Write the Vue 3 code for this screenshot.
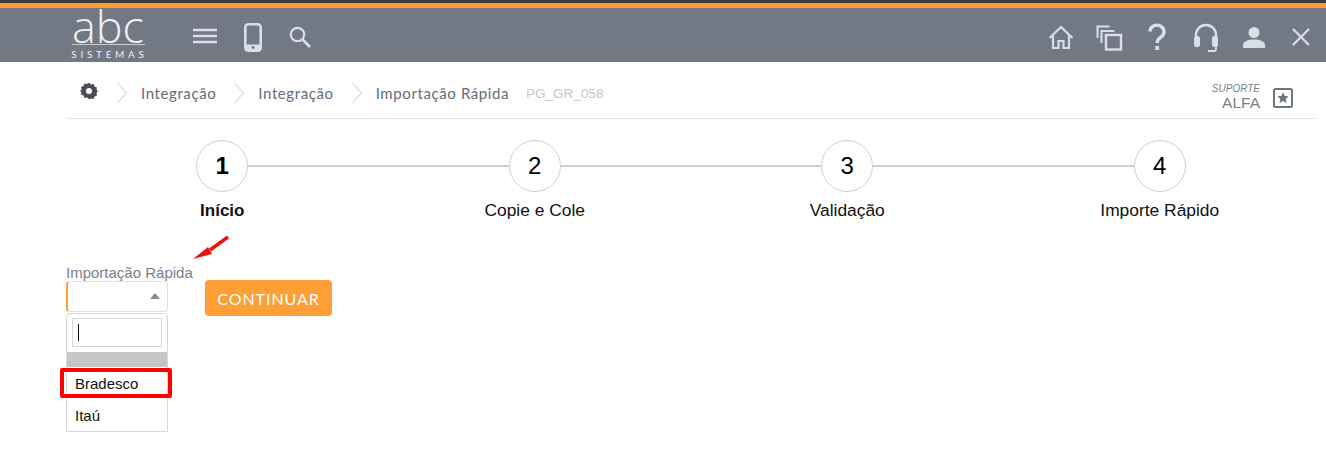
<template>
  <div class="pagina">
    <header class="topo">
      <div class="logo">
        <span class="logo-abc">abc</span>
        <span class="logo-sub">SISTEMAS</span>
      </div>
      <svg class="ic-menu" width="26" height="18" viewBox="0 0 26 18"><path d="M1 3h24M1 9h24M1 15h24" stroke="#d9dfe8" stroke-width="2.6" fill="none" /></svg>
      <svg class="ic-cel" width="18" height="29" viewBox="0 0 18 29"><rect x="1.3" y="1.3" width="15.400" height="26.400" rx="3" fill="none" stroke="#d9dfe8" stroke-width="2.6" /><rect x="1.300" y="21.500" width="15.400" height="6" fill="#d9dfe8" /><circle cx="9" cy="24.500" r="1.400" fill="#737885" /></svg>
      <svg class="ic-busca" width="24" height="24" viewBox="0 0 24 24"><circle cx="9.500" cy="9.500" r="6.700" fill="none" stroke="#d9dfe8" stroke-width="2.200" /><path d="M14.500 14.500l7.500 7.500" stroke="#d9dfe8" stroke-width="2.600" /></svg>

      <div class="acoes">
        <svg class="ic-casa" width="26" height="25" viewBox="0 0 26 25"><path d="M1.500 13L13 2l11.500 11M5 10.500V23h5.500v-7h5v7H21V10.500" fill="none" stroke="#d9dfe8" stroke-width="2.200" /></svg>
        <svg class="ic-janelas" width="27" height="27" viewBox="0 0 27 27"><path d="M1.500 14V2.500h12M5.500 19V7h13" fill="none" stroke="#d9dfe8" stroke-width="2" /><rect x="10" y="11" width="15" height="14.500" fill="none" stroke="#d9dfe8" stroke-width="2.400" /></svg>
        <svg class="ic-ajuda" width="20" height="28" viewBox="0 0 20 28"><path d="M3 8.500a7 6.500 0 1 1 11 5.500q-3.800 2.300-3.800 6" fill="none" stroke="#d9dfe8" stroke-width="3.400" /><rect x="8.300" y="23" width="3.800" height="4" fill="#d9dfe8" /></svg>
        <svg class="ic-fone" width="26" height="30" viewBox="0 0 26 30"><path d="M3 16V12a10 10 0 0 1 20 0v4" fill="none" stroke="#d9dfe8" stroke-width="2.400" /><rect x="1" y="13" width="6" height="11" rx="2.500" fill="#d9dfe8" /><rect x="19" y="13" width="6" height="11" rx="2.500" fill="#d9dfe8" /><path d="M23 24v2.500q0 1.500-2 1.500h-6" fill="none" stroke="#d9dfe8" stroke-width="1.800" /></svg>
        <svg class="ic-user" width="22" height="21" viewBox="0 0 22 21"><circle cx="11" cy="5.500" r="5.500" fill="#d9dfe8" /><path d="M0 21v-3c0-3.500 5-5.500 11-5.500s11 2 11 5.500v3z" fill="#d9dfe8" /></svg>
        <svg class="ic-fechar" width="18" height="18" viewBox="0 0 18 18"><path d="M1 1l16 16M17 1L1 17" stroke="#d9dfe8" stroke-width="2.200" /></svg>
      </div>
    </header>

    <main class="conteudo">
      <nav class="migalhas">
        <svg class="ic-config" width="18" height="18" viewBox="0 0 18 18">
          <path d="M9 .8l2 1.700 2.600-.5.900 2.500 2.500.9-.5 2.600L18 9l-1.500 1.900.5 2.600-2.500.9-.9 2.500-2.600-.5L9 17.200l-2-1.800-2.600.5-.9-2.500-2.500-.9.5-2.600L0 9l1.500-1.500-.5-2.600 2.500-.9.900-2.500 2.600.5z" fill="#4a4d55" />
          <circle cx="9" cy="9" r="3" fill="#fff" />
        </svg>
        <template v-for="item in migalhas" :key="item.id">
          <svg class="seta" width="12" height="22" viewBox="0 0 12 22"><path d="M1.500 1l9 10-9 10" fill="none" stroke="#e2e2e2" stroke-width="1.500" /></svg>
          <span class="migalha">{{ item.nome }}</span>
        </template>
        <span class="codigo">PG_GR_058</span>
        <div class="suporte">
          <div class="suporte-txt">
            <em>SUPORTE</em>
            <span>ALFA</span>
          </div>
          <svg class="ic-favorito" width="20" height="20" viewBox="0 0 20 20">
            <rect x="1" y="1" width="18" height="18" rx="1.500" fill="none" stroke="#6e7480" stroke-width="2" />
            <path d="M10 4.200l1.700 3.700 4 .4-3 2.700.9 4L10 13l-3.600 2 .9-4-3-2.700 4-.4z" fill="#6e7480" />
          </svg>
        </div>
      </nav>

      <ol class="passos">
        <li v-for="(p, i) in passos" :key="p" class="passo" :class="{ ativo: i === 0 }">
          <span class="bola">{{ i + 1 }}</span>
          <span class="passo-nome">{{ p }}</span>
        </li>
      </ol>

      <div class="formulario">
        <svg class="seta-vermelha" width="40" height="26" viewBox="0 0 40 26">
          <path d="M3 24L18 12 22 19z" fill="#f00f0f" />
          <path d="M20 15L38 2" stroke="#f00f0f" stroke-width="3.400" fill="none" />
        </svg>
        <div class="campo">
          <label>Importação Rápida</label>
          <div class="selecao"><i class="triangulo"></i></div>
          <div class="lista">
            <div class="busca-caixa"><div class="busca"><i class="cursor"></i></div></div>
            <div class="opcao vazia"></div>
            <div class="opcao">Bradesco</div>
            <div class="opcao">Itaú</div>
            <div class="destaque"></div>
          </div>
        </div>
        <button class="continuar">CONTINUAR</button>
      </div>
    </main>
  </div>
</template>

<script setup>
const migalhas = [
  { id: 1, nome: 'Integração' },
  { id: 2, nome: 'Integração' },
  { id: 3, nome: 'Importação Rápida' }
]
const passos = ['Início', 'Copie e Cole', 'Validação', 'Importe Rápido']
</script>

<style>
html, body {
  margin: 0;
  background: #fff;
  overflow: hidden;
}
</style>

<style scoped>
.pagina {
  font-family: "Liberation Sans", Arial, sans-serif;
  height: 469px;
  background: #fff;
}
.topo {
  height: 54px;
  background: #737885;
  border-top: 5px solid #fd9c31;
  box-shadow: 0 -3px 0 #3b3b3b;
  margin-top: 3px;
  display: flex;
  align-items: center;
  padding: 0 16px 0 71px;
  position: relative;
}
.logo {
  width: 77px;
  height: 54px;
  display: flex;
  flex-direction: column;
  align-items: center;
  color: #eef0f3;
}
.logo-abc {
  font-family: "Open Sans", sans-serif;
  font-weight: 300;
  font-size: 45px;
  line-height: 36px;
  border-bottom: 1px solid #c6cad1;
  width: 73px;
  margin-right: 3px;
  text-align: center;
  height: 36px;
  white-space: nowrap;
}
.logo-sub {
  font-family: "Lato", sans-serif;
  font-size: 10px;
  line-height: 14px;
  letter-spacing: 3.700px;
  white-space: nowrap;
  margin-top: 2px;
}
.ic-menu { margin-left: 44px; margin-top: 2px; }
.ic-cel { margin-left: 26px; margin-top: 4px; }
.ic-busca { margin-left: 26px; margin-top: 3px; }
.acoes {
  margin-left: auto;
  margin-top: 4px;
  display: flex;
  align-items: center;
}
.ic-casa { margin-right: 22px; }
.ic-janelas { margin-right: 24px; }
.ic-ajuda { margin-right: 26px; }
.ic-fone { margin-right: 24px; margin-top: 2px; }
.ic-user { margin-right: 27px; }
.conteudo {
  margin: 0 10px 0 66px;
}
.migalhas {
  height: 50px;
  padding: 6px 0 0 14px;
  border-bottom: 1px solid #e4e4e4;
  display: flex;
  align-items: center;
  color: #666c78;
}
.ic-config { margin-top: -5px; margin-right: 1px; }
.seta { margin: 0 13px 0 17px; }
.migalha {
  font-family: "Lato", sans-serif;
  font-size: 15px;
  letter-spacing: .6px;
  white-space: nowrap;
}
.codigo {
  margin-left: 17px;
  font-size: 13.500px;
  color: #c4c6ca;
  white-space: nowrap;
}
.suporte {
  margin-left: auto;
  margin-top: 8px;
  margin-right: 23px;
  display: flex;
  align-items: center;
  gap: 13px;
}
.ic-favorito { margin-top: 2px; }
.suporte-txt {
  display: flex;
  flex-direction: column;
  align-items: flex-end;
  color: #7b7f88;
}
.suporte-txt em {
  font-size: 10px;
  line-height: 11px;
}
.suporte-txt span {
  font-size: 15.500px;
  line-height: 18px;
}
.passos {
  list-style: none;
  margin: 0;
  padding: 21px 0 0;
  display: grid;
  grid-template-columns: repeat(4, 1fr);
}
.passo {
  display: flex;
  flex-direction: column;
  align-items: center;
  position: relative;
}
.passo:not(:last-child)::after {
  content: "";
  position: absolute;
  top: 25px;
  left: 50%;
  width: 100%;
  height: 2px;
  background: #cfcfcf;
}
.bola {
  width: 50px;
  height: 50px;
  border: 1px solid #d0d0d0;
  border-radius: 50%;
  background: #fff;
  color: #000;
  font-size: 24px;
  line-height: 50px;
  text-align: center;
  position: relative;
  z-index: 1;
}
.passo-nome {
  margin-top: 8px;
  font-size: 17.400px;
  line-height: 20px;
  color: #111;
}
.ativo .bola,
.ativo .passo-nome {
  font-weight: 700;
}
.ativo .passo-nome { font-size: 17px; margin-top: 9px; }
.formulario {
  display: flex;
  align-items: flex-start;
  margin-top: 43px;
  position: relative;
}
.seta-vermelha {
  position: absolute;
  left: 124px;
  top: -29px;
}
.campo {
  width: 102px;
  position: relative;
}
.campo label {
  display: block;
  font-size: 15px;
  line-height: 17px;
  color: #7a7f8a;
  white-space: nowrap;
}
.selecao {
  height: 29px;
  border: 1px solid #dfdfdf;
  border-left: 2px solid #fd9c31;
  border-radius: 4px;
  position: relative;
}
.triangulo {
  position: absolute;
  right: 7px;
  top: 11px;
  border-left: 5px solid transparent;
  border-right: 5px solid transparent;
  border-bottom: 6px solid #8a8a8a;
}
.lista {
  position: absolute;
  top: 49px;
  left: 0;
  width: 100px;
  height: 117px;
  border: 1px solid #d8d8d8;
  border-radius: 4px 4px 0 0;
  background: #fff;
  color: #111;
  font-size: 15px;
}
.busca-caixa {
  padding: 4px 5px 0;
  height: 38px;
  box-sizing: border-box;
}
.busca {
  height: 27px;
  border: 1px solid #d8d8d8;
  position: relative;
}
.cursor {
  position: absolute;
  left: 5px;
  top: 5px;
  width: 1px;
  height: 17px;
  background: #111;
}
.opcao {
  height: 32px;
  line-height: 33px;
  padding-left: 8px;
}
.opcao.vazia {
  height: 15px;
  background: #c6c6c6;
}
.destaque {
  position: absolute;
  left: -7px;
  top: 54px;
  width: 104px;
  height: 22px;
  border: 4px solid #f00;
  border-radius: 2px;
}
.continuar {
  margin: 16px 0 0 37px;
  width: 127px;
  height: 36px;
  border: 0;
  border-radius: 4px;
  background: #fd9f36;
  color: #fff;
  font-family: "Lato", sans-serif;
  font-size: 16px;
  letter-spacing: .95px;
  padding: 0;
}
</style>
